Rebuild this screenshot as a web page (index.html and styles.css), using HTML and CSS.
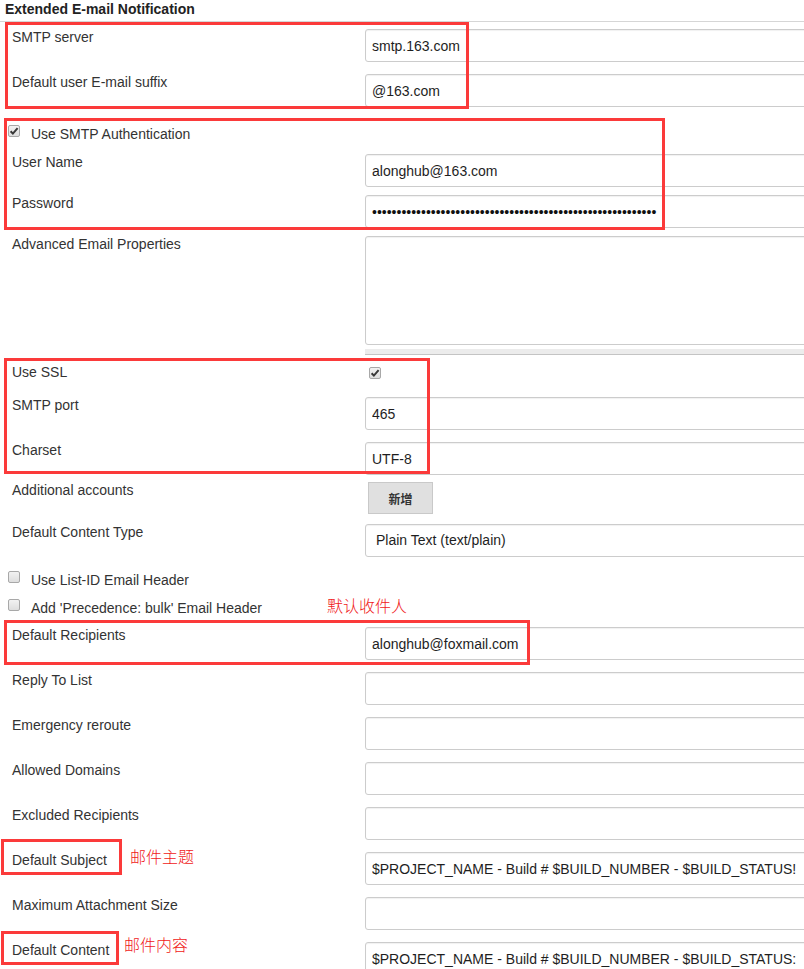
FILE: index.html
```html
<!DOCTYPE html>
<html lang="zh-CN">
<head>
<meta charset="utf-8">
<title>Extended E-mail Notification</title>
<link rel="stylesheet" href="styles.css">
</head>
<body>
<div class="page">
  <div class="section-header">Extended E-mail Notification</div>

  <div class="form">
    <div class="row mt7"><div class="label">SMTP server</div><div class="field"><input class="input" type="text" value="smtp.163.com"></div></div>
    <div class="row mt12"><div class="label">Default user E-mail suffix</div><div class="field"><input class="input" type="text" value="@163.com"></div></div>

    <div class="check-row mt19"><span class="cb checked"><svg viewBox="0 0 12 12" width="12" height="12"><path d="M2.6 6.2 L4.9 8.6 L9.6 3.2" fill="none" stroke="#3a3a3a" stroke-width="2"/></svg></span><span>Use SMTP Authentication</span></div>

    <div class="row mt11"><div class="label">User Name</div><div class="field"><input class="input" type="text" value="alonghub@163.com"></div></div>
    <div class="row mt8"><div class="label">Password</div><div class="field"><input class="input dots" type="text" value="••••••••••••••••••••••••••••••••••••••••••••••••••••••••••"></div></div>

    <div class="row mt8"><div class="label">Advanced Email Properties</div><div class="field"><div class="textarea"></div><div class="textarea-handle"></div></div></div>

    <div class="row mt9"><div class="label">Use SSL</div><div class="field"><span class="cb checked ssl"><svg viewBox="0 0 12 12" width="12" height="12"><path d="M2.6 6.2 L4.9 8.6 L9.6 3.2" fill="none" stroke="#3a3a3a" stroke-width="2"/></svg></span></div></div>
    <div class="row mt16"><div class="label">SMTP port</div><div class="field"><input class="input" type="text" value="465"></div></div>
    <div class="row mt12"><div class="label">Charset</div><div class="field"><input class="input" type="text" value="UTF-8"></div></div>

    <div class="row mt7"><div class="label">Additional accounts</div><div class="field"><button class="btn" type="button">新增</button></div></div>
    <div class="row mt10"><div class="label">Default Content Type</div><div class="field"><div class="input select">Plain Text (text/plain)</div></div></div>

    <div class="check-row mt15"><span class="cb"></span><span>Use List-ID Email Header</span></div>
    <div class="check-row mt11"><span class="cb"></span><span>Add 'Precedence: bulk' Email Header</span></div>

    <div class="row mt10"><div class="label">Default Recipients</div><div class="field"><input class="input" type="text" value="alonghub@foxmail.com"></div></div>
    <div class="row mt12"><div class="label">Reply To List</div><div class="field"><input class="input" type="text" value=""></div></div>
    <div class="row mt12"><div class="label">Emergency reroute</div><div class="field"><input class="input" type="text" value=""></div></div>
    <div class="row mt12"><div class="label">Allowed Domains</div><div class="field"><input class="input" type="text" value=""></div></div>
    <div class="row mt12"><div class="label">Excluded Recipients</div><div class="field"><input class="input" type="text" value=""></div></div>
    <div class="row mt12"><div class="label">Default Subject</div><div class="field"><input class="input" type="text" value="$PROJECT_NAME - Build # $BUILD_NUMBER - $BUILD_STATUS!"></div></div>
    <div class="row mt12"><div class="label">Maximum Attachment Size</div><div class="field"><input class="input" type="text" value=""></div></div>
    <div class="row mt12"><div class="label">Default Content</div><div class="field"><input class="input" type="text" value="$PROJECT_NAME - Build # $BUILD_NUMBER - $BUILD_STATUS:"></div></div>
  </div>

  <div class="mark box-smtp"></div>
  <div class="mark box-auth"></div>
  <div class="mark box-ssl"></div>
  <div class="mark box-recipients"></div>
  <div class="mark box-subject"></div>
  <div class="mark box-content"></div>

  <div class="note note-recipients">默认收件人</div>
  <div class="note note-subject">邮件主题</div>
  <div class="note note-content">邮件内容</div>
</div>
</body>
</html>
```

FILE: styles.css
```css
html, body {
  margin: 0;
  padding: 0;
  overflow: hidden;
  background: #fff;
}

body {
  font-family: "Liberation Sans", Arial, "Noto Sans CJK SC", sans-serif;
  font-size: 14px;
  color: #333;
}

.page {
  position: relative;
  width: 804px;
  height: 969px;
  overflow: hidden;
}

.section-header {
  font-weight: bold;
  font-size: 14px;
  line-height: 16px;
  padding: 1px 5px 4px;
  border-bottom: 1px solid #d6d6d6;
  color: #222;
}

.form {
  display: flex;
  flex-direction: column;
}

.row {
  display: flex;
  align-items: flex-start;
}

.label {
  flex: 0 0 365px;
  box-sizing: border-box;
  padding-left: 12px;
  line-height: 17px;
}

.field {
  flex: 0 0 460px;
}

.input {
  display: block;
  box-sizing: border-box;
  width: 460px;
  height: 33px;
  margin: 0;
  padding: 0 6px;
  border: 1px solid #ccc;
  border-radius: 3px;
  background: #fff;
  box-shadow: inset 0 1px 1px rgba(0, 0, 0, 0.06);
  font: 14px "Liberation Sans", Arial, sans-serif;
  color: #1e1e1e;
  outline: none;
}

.select {
  padding-left: 10px;
  line-height: 31px;
}

.dots {
  letter-spacing: 0;
  color: #111;
}

.textarea {
  box-sizing: border-box;
  width: 460px;
  height: 109px;
  border: 1px solid #ccc;
  border-radius: 3px;
  background: #fff;
  box-shadow: inset 0 1px 1px rgba(0, 0, 0, 0.06);
}

.textarea-handle {
  margin-top: 4px;
  height: 5px;
  width: 460px;
  background: #ececec;
  border-bottom: 1px solid #c4c4c4;
}

.check-row {
  display: flex;
  align-items: flex-start;
  line-height: 17px;
  padding-left: 8px;
}

.cb {
  display: block;
  flex: 0 0 auto;
  box-sizing: border-box;
  width: 12px;
  height: 12px;
  margin-top: -1px;
  margin-right: 11px;
  border: 1px solid #a8a8a8;
  border-radius: 2px;
  background: linear-gradient(#f2f2f2, #dedede);
  overflow: hidden;
}

.cb svg {
  display: block;
  margin: -1px 0 0 -1px;
}

.cb.ssl {
  margin: 3px 0 0 4px;
}

.btn {
  display: block;
  box-sizing: border-box;
  width: 65px;
  height: 32px;
  margin: 0 0 0 3px;
  padding: 0;
  border: 1px solid #c9c9c9;
  border-radius: 0;
  background: #e0e0e0;
  color: #333;
  font: bold 12px "Noto Sans CJK SC", sans-serif;
}

.mt7 { margin-top: 7px; }
.mt8 { margin-top: 8px; }
.mt9 { margin-top: 9px; }
.mt10 { margin-top: 10px; }
.mt11 { margin-top: 11px; }
.mt12 { margin-top: 12px; }
.mt15 { margin-top: 15px; }
.mt16 { margin-top: 16px; }
.mt19 { margin-top: 19px; }

/* annotation overlays */
.mark {
  position: absolute;
  box-sizing: border-box;
  border: 3px solid #fb3a3a;
}

.box-smtp { left: 5px; top: 22px; width: 464px; height: 87px; }
.box-auth { left: 4px; top: 118px; width: 661px; height: 112px; }
.box-ssl { left: 4px; top: 358px; width: 426px; height: 116px; }
.box-recipients { left: 4px; top: 620px; width: 526px; height: 45px; }
.box-subject { left: 1px; top: 839px; width: 121px; height: 36px; }
.box-content { left: 1px; top: 931px; width: 118px; height: 34px; }

.note {
  position: absolute;
  font-family: "Noto Sans CJK SC", sans-serif;
  font-weight: 300;
  font-size: 16px;
  line-height: 16px;
  color: #f01818;
  white-space: nowrap;
}

.note-recipients { left: 327px; top: 597px; }
.note-subject { left: 130px; top: 848px; }
.note-content { left: 124px; top: 936px; }
```
